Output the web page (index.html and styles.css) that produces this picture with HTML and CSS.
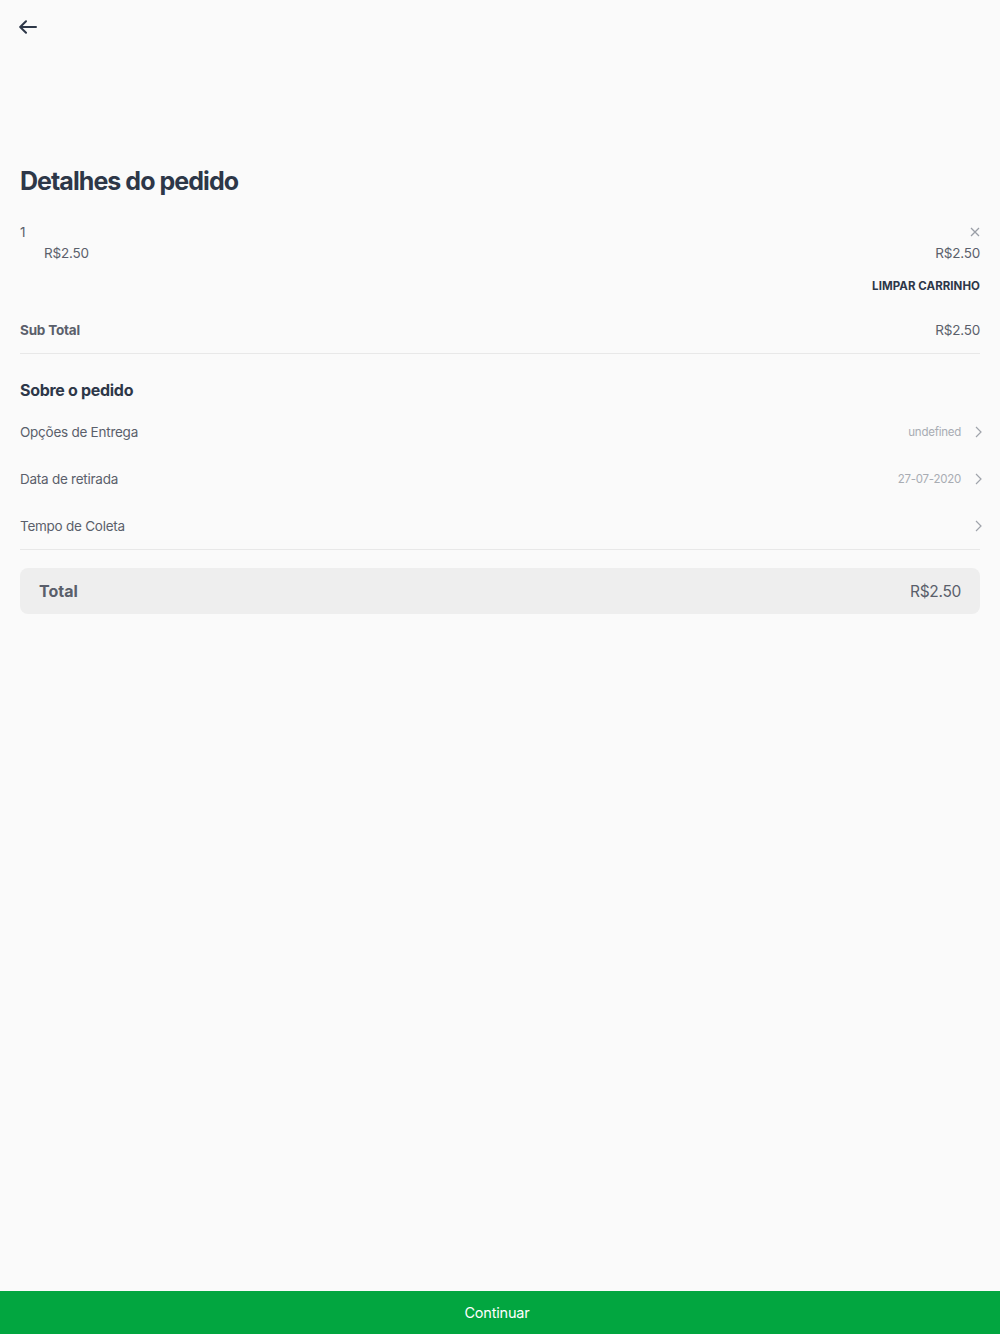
FILE: index.html
```html
<!DOCTYPE html>
<html lang="pt-BR">
<head>
    <meta charset="UTF-8">
    <meta name="viewport" content="width=device-width, initial-scale=1.0">
    <title>Detalhes do pedido</title>
    <link rel="stylesheet" href="styles.css">
</head>
<body>
    <header class="top-bar">
        <button class="back-button" aria-label="Voltar">
            <svg width="18" height="14" viewBox="0 0 18 14" fill="none" stroke="#2d3748" stroke-width="2" stroke-linecap="round" stroke-linejoin="round">
                <path d="M17 7H1.5M7 1.2L1.2 7L7 12.8"/>
            </svg>
        </button>
    </header>

    <main class="content">
        <h1>Detalhes do pedido</h1>

        <div class="cart-item">
            <div class="item-top">
                <span class="item-name">1</span>
                <button class="remove-button" aria-label="Remover">
                    <svg width="10" height="10" viewBox="0 0 10 10" stroke="#9a9ea6" stroke-width="1.3">
                        <path d="M1 1L9 9M9 1L1 9"/>
                    </svg>
                </button>
            </div>
            <div class="item-bottom">
                <span class="item-price">R$2.50</span>
                <span>R$2.50</span>
            </div>
        </div>

        <div class="clear-row">
            <button class="clear-button">LIMPAR CARRINHO</button>
        </div>

        <div class="subtotal">
            <span class="subtotal-label">Sub Total</span>
            <span>R$2.50</span>
        </div>

        <section class="about">
            <h2>Sobre o pedido</h2>
            <div class="option-row">
                <span class="option-label">Opções de Entrega</span>
                <span class="option-value">undefined</span>
                <svg class="chevron" width="7" height="12" viewBox="0 0 7 12" fill="none" stroke="#a0a4ab" stroke-width="1.2"><path d="M1 1L6 6L1 11"/></svg>
            </div>
            <div class="option-row">
                <span class="option-label">Data de retirada</span>
                <span class="option-value">27-07-2020</span>
                <svg class="chevron" width="7" height="12" viewBox="0 0 7 12" fill="none" stroke="#a0a4ab" stroke-width="1.2"><path d="M1 1L6 6L1 11"/></svg>
            </div>
            <div class="option-row">
                <span class="option-label">Tempo de Coleta</span>
                <span class="option-value"></span>
                <svg class="chevron" width="7" height="12" viewBox="0 0 7 12" fill="none" stroke="#a0a4ab" stroke-width="1.2"><path d="M1 1L6 6L1 11"/></svg>
            </div>
        </section>

        <div class="total-box">
            <span class="total-label">Total</span>
            <span class="total-value">R$2.50</span>
        </div>
    </main>

    <button class="continue-button">Continuar</button>
</body>
</html>
```

FILE: styles.css
```css
body {
    font-family: 'Inter', 'Lato', sans-serif;
    margin: 0;
    padding: 0;
    background-color: #fafafa;
    color: #5a5f6b;
    height: 1334px;
    position: relative;
}

button {
    font-family: inherit;
    background: none;
    border: none;
    padding: 0;
    cursor: pointer;
}

.top-bar {
    padding: 20px 0 0 19px;
    height: 30px;
}

.back-button {
    display: block;
    line-height: 0;
}

.content {
    padding: 0 20px;
}

h1 {
    margin: 114px 0 0;
    font-size: 25px;
    font-weight: 700;
    letter-spacing: -0.95px;
    color: #2d3748;
    line-height: 34px;
}

.cart-item {
    margin-top: 24px;
    font-size: 13.5px;
    letter-spacing: -0.2px;
}

.item-top, .item-bottom {
    display: flex;
    justify-content: space-between;
    align-items: center;
}

.item-top {
    height: 20px;
}

.remove-button {
    line-height: 0;
}

.item-bottom {
    margin-top: 1px;
    height: 20px;
}

.item-price {
    padding-left: 24px;
}

.clear-row {
    display: flex;
    justify-content: flex-end;
    margin-top: 16px;
}

.clear-button {
    font-size: 11.5px;
    font-weight: 700;
    color: #2d3748;
    letter-spacing: 0.05px;
}

.subtotal {
    display: flex;
    justify-content: space-between;
    font-size: 13.5px;
    letter-spacing: -0.2px;
    margin-top: 29px;
    padding-bottom: 15px;
    border-bottom: 1px solid #e8e8e8;
}

.subtotal-label {
    font-weight: 700;
}

.about {
    border-bottom: 1px solid #e8e8e8;
}

h2 {
    margin: 26px 0 8px;
    font-size: 16px;
    font-weight: 700;
    letter-spacing: -0.3px;
    color: #2d3748;
}

.option-row {
    display: flex;
    align-items: center;
    height: 47px;
    font-size: 13.5px;
    letter-spacing: -0.25px;
}

.option-label {
    flex: 1;
}

.option-value {
    font-size: 11.5px;
    color: #a8acb3;
    margin-right: 14px;
}

.chevron {
    margin-right: -2px;
}

.total-box {
    display: flex;
    justify-content: space-between;
    align-items: center;
    margin-top: 18px;
    height: 46px;
    padding: 0 19px;
    background-color: #eeeeee;
    border-radius: 8px;
}

.total-label {
    font-size: 16px;
    font-weight: 700;
}

.total-value {
    font-size: 15.5px;
    letter-spacing: -0.3px;
}

.continue-button {
    position: absolute;
    left: 0;
    right: 0;
    bottom: 0;
    height: 43px;
    width: 100%;
    padding-right: 6px;
    background-color: #02a640;
    color: #fff;
    font-size: 14.5px;
    letter-spacing: -0.2px;
}
```
